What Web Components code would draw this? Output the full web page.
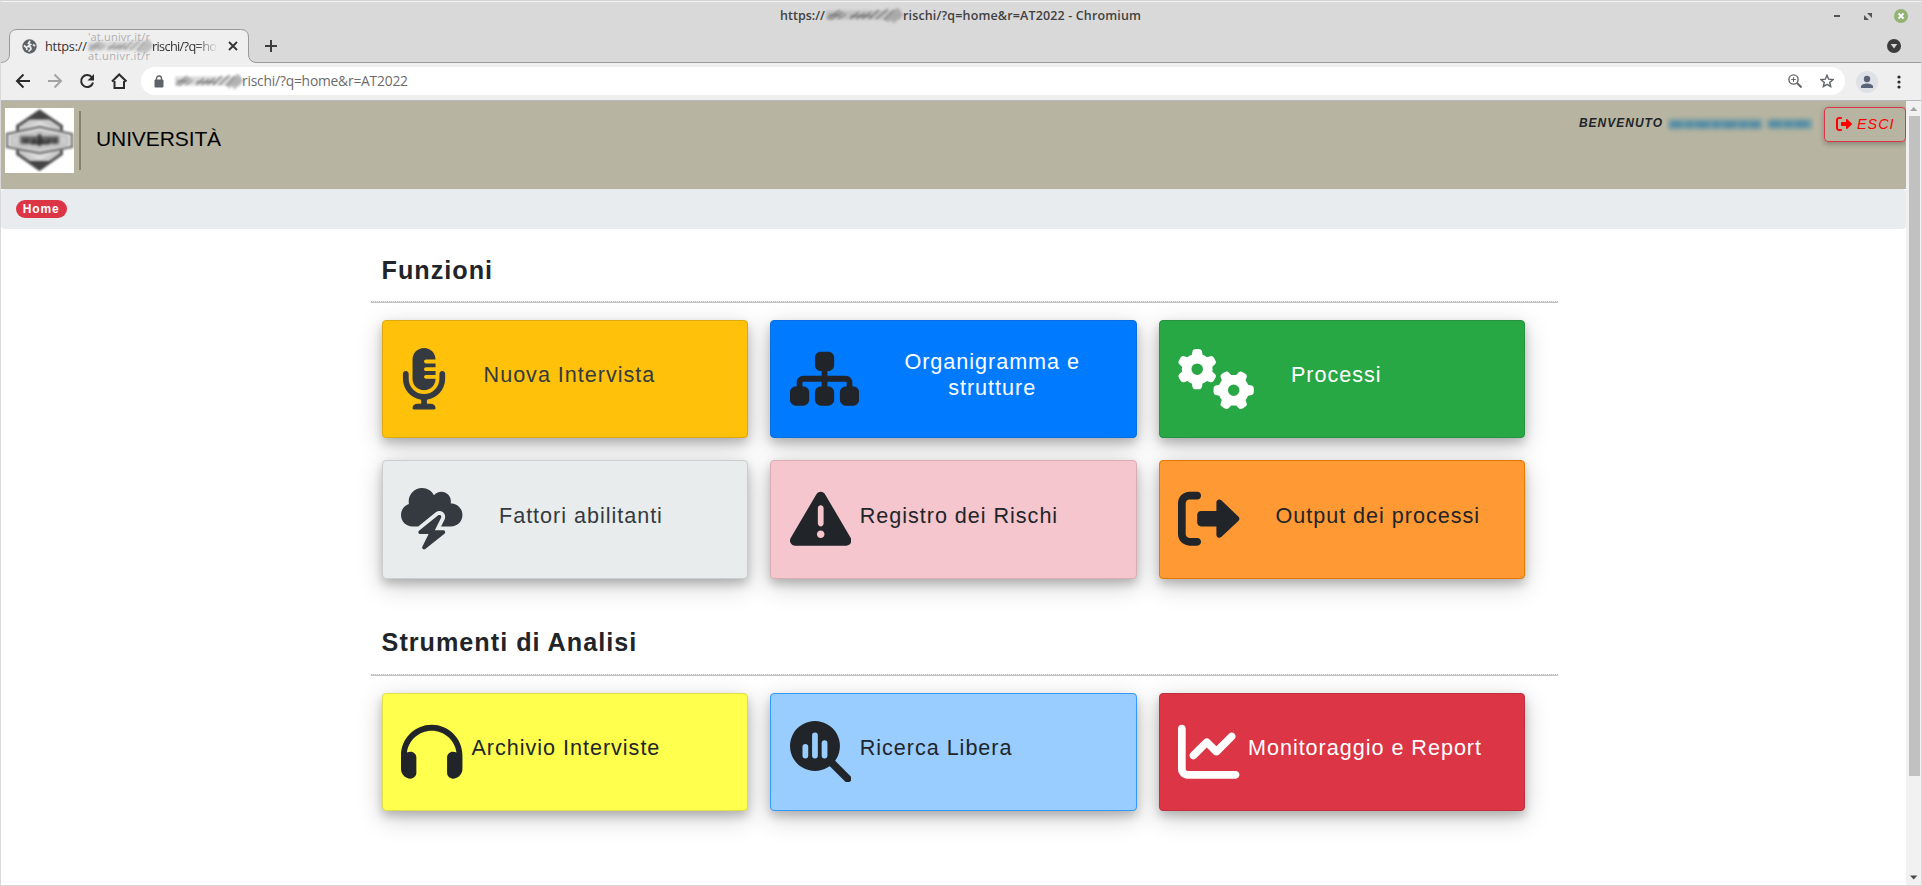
<!DOCTYPE html>
<html lang="it">
<head>
<meta charset="utf-8">
<title>Home</title>
<style>
html,body{margin:0;height:100%;overflow:hidden}
body{background:#fff;font-family:"Liberation Sans",Arial,sans-serif}
</style>
</head>
<body>
<browser-window>
  <window-title slot="title"></window-title>
  <tab-strip slot="tabs"></tab-strip>
  <tool-bar slot="tools"></tool-bar>
  <app-header></app-header>
  <bread-crumb>Home</bread-crumb>
  <tile-section heading="Funzioni">
    <app-tile icon="mic" style="--x:100.6px;--bg:#ffc10a;--bd:#dea90f;--fg:#343a40">Nuova Intervista</app-tile>
    <app-tile icon="sitemap" style="--x:133px;--bg:#007bff;--bd:#0a6fde;--fg:#fff;--ic:#212529">Organigramma e<br>strutture</app-tile>
    <app-tile icon="gears" style="--x:131.2px;--bg:#28a745;--bd:#26923f;--fg:#fff">Processi</app-tile>
    <app-tile icon="storm" style="--x:116px;--dy:1px;--bg:#e8ecec;--bd:#cbcece;--fg:#343a40">Fattori abilitanti</app-tile>
    <app-tile icon="warn" style="--x:88.3px;--dy:1px;--bg:#f5c6cd;--bd:#d8aeb4;--fg:#212529">Registro dei Rischi</app-tile>
    <app-tile icon="exit" style="--x:115.7px;--dy:1px;--bg:#ff9933;--bd:#e67700;--fg:#212529">Output dei processi</app-tile>
  </tile-section>
  <tile-section heading="Strumenti di Analisi" style="--hp:26px">
    <app-tile icon="phones" style="--x:88.500px;--dy:1px;--bg:#ffff4d;--bd:#dfdf49;--fg:#212529">Archivio Interviste</app-tile>
    <app-tile icon="search" style="--x:88.3px;--dy:1px;--bg:#99ccff;--bd:#3399ff;--fg:#212529">Ricerca Libera</app-tile>
    <app-tile icon="chart" style="--x:88.2px;--dy:1px;--bg:#dc3545;--bd:#c12f3e;--fg:#fff">Monitoraggio e Report</app-tile>
  </tile-section>
</browser-window>
<script>
const GEAR='M308.5 135.3c7.1-6.3 9.9-16.2 6.2-25c-2.3-5.3-4.8-10.5-7.6-15.5L304 89.4c-3-5-6.3-9.9-9.8-14.6c-5.7-7.6-15.7-10.1-24.7-7.1l-28.2 9.3c-10.7-8.8-23-16-36.2-20.9L199 27.1c-1.9-9.3-9.1-16.7-18.5-17.8C173.9 8.4 167.2 8 160.4 8h-.7c-6.8 0-13.5 .4-20.1 1.2c-9.4 1.1-16.6 8.6-18.5 17.8L115 56.1c-13.3 5-25.5 12.1-36.2 20.9L50.5 67.8c-9-3-19-.5-24.7 7.1c-3.5 4.7-6.8 9.6-9.9 14.6l-3 5.3c-2.8 5-5.3 10.2-7.6 15.6c-3.7 8.7-.9 18.6 6.2 25l22.2 19.8C32.6 161.9 32 168.9 32 176s.6 14.1 1.7 20.9L11.5 216.7c-7.1 6.3-9.9 16.2-6.2 25c2.3 5.3 4.8 10.5 7.6 15.6l3 5.2c3 5.1 6.3 9.9 9.9 14.6c5.7 7.6 15.7 10.1 24.7 7.1l28.2-9.3c10.7 8.8 23 16 36.2 20.9l6.1 29.1c1.9 9.3 9.1 16.7 18.5 17.8c6.7 .8 13.5 1.2 20.4 1.2s13.7-.4 20.4-1.2c9.4-1.1 16.6-8.6 18.5-17.8l6.1-29.1c13.3-5 25.5-12.1 36.2-20.9l28.2 9.3c9 3 19 .5 24.7-7.1c3.5-4.7 6.8-9.5 9.8-14.6l3.1-5.4c2.8-5 5.3-10.2 7.6-15.5c3.7-8.7 .9-18.6-6.2-25l-22.2-19.8c1.1-6.8 1.7-13.8 1.7-20.9s-.6-14.1-1.7-20.9l22.2-19.8zM112 176a48 48 0 1 1 96 0 48 48 0 1 1 -96 0z';
const EXIT='M96 480h64C177.7 480 192 465.7 192 448S177.7 416 160 416H96c-17.67 0-32-14.33-32-32V128c0-17.67 14.33-32 32-32h64C177.7 96 192 81.67 192 64S177.7 32 160 32H96C42.98 32 0 74.98 0 128v256C0 437 42.98 480 96 480zM504.8 238.5l-144.1-136c-6.975-6.578-17.2-8.375-26-4.594c-8.803 3.797-14.51 12.47-14.51 22.05l-.0918 72l-128-.001c-17.69 0-32.02 14.33-32.02 32v64c0 17.67 14.34 32 32.02 32l128 .001l.0918 71.1c0 9.578 5.707 18.25 14.51 22.05c8.803 3.781 19.03 1.984 26-4.594l144.1-136C514.4 264.4 514.4 247.6 504.8 238.5z';
const p=d=>`<path d="${d}"/>`;
const ICONS={
 mic:[384,p('M96 96V256c0 53 43 96 96 96s96-43 96-96H208c-8.8 0-16-7.2-16-16s7.2-16 16-16h80V192H208c-8.8 0-16-7.2-16-16s7.2-16 16-16h80V128H208c-8.8 0-16-7.2-16-16s7.2-16 16-16h80c0-53-43-96-96-96S96 43 96 96zM320 240v16c0 70.7-57.3 128-128 128s-128-57.3-128-128V216c0-13.3-10.7-24-24-24s-24 10.7-24 24v40c0 89.1 66.2 162.7 152 174.4V464H136c-22 0-40 14-40 36 0 8 5 12 12 12H276c7 0 12-4 12-12 0-22-18-36-40-36H216V430.4c85.8-11.7 152-85.3 152-174.4V216c0-13.3-10.7-24-24-24s-24 10.7-24 24v24z')],
 sitemap:[576,p('M208 80c0-26.5 21.5-48 48-48h64c26.5 0 48 21.5 48 48v64c0 26.5-21.5 48-48 48h-8v40H464c30.9 0 56 25.1 56 56v32h8c26.5 0 48 21.5 48 48v64c0 26.5-21.5 48-48 48H464c-26.5 0-48-21.5-48-48V368c0-26.5 21.5-48 48-48h8V288c0-4.4-3.6-8-8-8H312v40h8c26.5 0 48 21.5 48 48v64c0 26.5-21.5 48-48 48H256c-26.5 0-48-21.5-48-48V368c0-26.5 21.5-48 48-48h8V280H112c-4.4 0-8 3.6-8 8v32h8c26.5 0 48 21.5 48 48v64c0 26.5-21.5 48-48 48H48c-26.5 0-48-21.5-48-48V368c0-26.5 21.5-48 48-48h8V288c0-30.9 25.1-56 56-56H264V192h-8c-26.5 0-48-21.5-48-48V80z')],
 gears:[640,p(GEAR)+`<path transform="translate(464 352) rotate(90) translate(-160 -176)" d="${GEAR}"/>`],
 storm:[512,p('M0 224c0 53 43 96 96 96h47.2L290 202.5c17.6-14.1 42.6-14 60.2 .2s22.8 38.6 12.8 58.8L333.7 320H352h64c53 0 96-43 96-96s-43-96-96-96c-.5 0-1.1 0-1.6 0c1.1-5.2 1.6-10.5 1.6-16c0-44.2-35.8-80-80-80c-24.3 0-46.1 10.9-60.8 28C256.5 24.3 219.1 0 176 0C114.1 0 64 50.1 64 112c0 7.1 .7 14.1 1.9 20.8C27.6 145.4 0 181.5 0 224zm330.1 3.6c-5.8-4.7-14.2-4.7-20.1-.1l-160 128c-5.3 4.2-7.4 11.4-5.1 17.8s8.3 10.7 15.1 10.7h70.1L177.7 488.8c-3.4 6.7-1.6 14.9 4.3 19.6s14.2 4.7 20.1 .1l160-128c5.3-4.2 7.4-11.4 5.1-17.8s-8.3-10.7-15.1-10.7H281.9l52.4-104.8c3.4-6.7 1.6-14.9-4.2-19.6z')],
 warn:[512,p('M506.3 417l-213.3-364c-16.33-28-57.54-28-73.98 0l-213.2 364C-10.59 444.9 9.849 480 42.74 480h426.6C502.1 480 522.6 445 506.3 417zM232 168c0-13.25 10.75-24 24-24S280 154.8 280 168v128c0 13.25-10.75 24-23.1 24S232 309.3 232 296V168zM256 416c-17.36 0-31.44-14.08-31.44-31.44c0-17.36 14.07-31.44 31.44-31.44s31.44 14.08 31.44 31.44C287.4 401.9 273.4 416 256 416z')],
 exit:[512,p(EXIT)],
 phones:[512,p('M256 80C149.9 80 62.4 159.4 49.6 262c9.4-3.8 19.6-6 30.4-6c26.5 0 48 21.5 48 48V432c0 26.5-21.5 48-48 48c-44.2 0-80-35.8-80-80V384 336 288C0 146.6 114.6 32 256 32s256 114.6 256 256v48 48 16c0 44.2-35.8 80-80 80c-26.5 0-48-21.5-48-48V304c0-26.5 21.5-48 48-48c10.8 0 21 2.1 30.4 6C449.6 159.4 362.1 80 256 80z')],
 search:[512,'<path d="M208 0a208 208 0 1 0 .1 0zM104 216a24 24 0 0 1 48 0v72a24 24 0 0 1-48 0zM184 120a24 24 0 0 1 48 0v168a24 24 0 0 1-48 0zM264 184a24 24 0 0 1 48 0v104a24 24 0 0 1-48 0z" fill-rule="evenodd"/><path d="M350 350L480 480" stroke="currentColor" stroke-width="64" stroke-linecap="round"/>'],
 chart:[512,p('M64 64c0-17.7-14.3-32-32-32S0 46.3 0 64V400c0 44.2 35.8 80 80 80H480c17.7 0 32-14.3 32-32s-14.3-32-32-32H80c-8.8 0-16-7.2-16-16V64zm406.6 86.6c12.5-12.5 12.5-32.8 0-45.3s-32.8-12.5-45.3 0L320 210.7l-57.4-57.4c-12.5-12.5-32.8-12.5-45.3 0l-112 112c-12.5 12.5-12.5 32.8 0 45.3s32.8 12.5 45.3 0L240 221.3l57.4 57.4c12.5 12.5 32.8 12.5 45.3 0l128-128z')]
};
function define(name,html,after){
  customElements.define(name,class extends HTMLElement{
    connectedCallback(){
      if(this.shadowRoot)return;
      this.attachShadow({mode:'open'}).innerHTML=typeof html==='function'?html(this):html;
      if(after)after(this);
    }
  });
}

/* Text tracked so that it fills a given width. */
define('fit-text','<style>:host{display:inline-block;white-space:nowrap}</style><span><slot></slot></span>',el=>{
  const w=+el.getAttribute('width'),s=el.shadowRoot.querySelector('span');
  const n=el.textContent.length;
  s.style.letterSpacing=((w-s.getBoundingClientRect().width)/(n-1))+'px';
  el.style.width=w+'px';
});

/* Smeared strip over a hidden host name. */
define('smear-mark',`<style>:host{display:block;width:76px;height:16px}svg{display:block;overflow:visible}</style>
<svg width="100%" height="16" viewBox="0 0 76 16" preserveAspectRatio="none" fill="none">
<g style="filter:blur(1.1px)"><path d="M0 8h75" stroke="#999" stroke-width="9" opacity=".36"/>
<g stroke="#555" stroke-width="2" opacity=".5"><path d="M1 12L14 3M4 13L17 5M12 12l8-5M24 12l9-7M30 12l9-6M36 12l9-7M43 12l10-9M50 12l12-10M58 13l10-10"/></g>
<path d="M2 8h12M24 9h22" stroke="#444" stroke-width="2" opacity=".35"/><path d="M60 14l13-12M66 15l10-9" stroke="#999" stroke-width="5" opacity=".6"/></g></svg>`);

define('browser-window',`<style>
:host{display:grid;grid-template-rows:29px 34px 38px 1fr;width:1922px;height:886px;box-sizing:border-box;border:solid #d9d9d9;border-width:0 1px 1px;background:#fff;overflow:hidden}
.view{display:grid;grid-template-columns:1fr 15px;min-height:0}
.page{overflow:hidden;min-width:0}
.bar{background:#f1f1f1;display:grid;grid-template-rows:15px 660px 1fr;justify-items:center}
.thumb{width:11px;height:660px;background:#c1c1c1;margin-left:1px}
svg{display:block}.dn{align-self:end}
</style>
<slot name="title"></slot><slot name="tabs"></slot><slot name="tools"></slot>
<div class="view"><div class="page"><slot></slot></div>
<div class="bar"><svg width="15" height="15"><path d="M4 10l3.7-4 3.7 4z" fill="#a3a3a3"/></svg><div class="thumb"></div><svg class="dn" width="15" height="15"><path d="M4 5.5l3.7 4 3.7-4z" fill="#4b4b4b"/></svg></div></div>`);

define('window-title',`<style>
:host{display:grid;grid-template-columns:779px 46px 77px 238px 1fr;background:#d9d9d9;box-shadow:inset 0 1px #d3d3d3,inset 0 2px #f3f3f3;align-items:center;font:600 12.5px/29px "Open Sans","Noto Sans",sans-serif;color:#414141;height:29px}
fit-text{position:relative;top:1px}
.b{display:flex;justify-self:end;gap:21px;align-items:center;margin-right:13px;padding-top:2px}
svg{display:block}
</style><i></i><fit-text width="45">https://</fit-text><smear-mark></smear-mark><fit-text width="238">rischi/?q=home&amp;r=AT2022 - Chromium</fit-text>
<div class="b"><svg width="10" height="14"><path d="M2 6h6v2H2z" fill="#555"/></svg>
<svg width="10" height="14"><path d="M4 4h5v5zM1 6v5h5z" fill="#555"/><path d="M2 4l6 7" stroke="#d9d9d9"/></svg>
<svg width="14" height="14"><circle cx="7" cy="7" r="7" fill="#92b372"/><path d="M4.5 4.5l5 5m0-5l-5 5" stroke="#fff" stroke-width="2"/></svg></div>`);

define('tab-strip',`<style>
:host{display:grid;grid-template-columns:258px 26px 1fr;background:#d9d9d9;height:34px;box-shadow:inset 0 -1px #999;font:12.8px/34px "Open Sans","Noto Sans",sans-serif;color:#333}
.tab{display:grid;height:34px}
.tab>*{grid-area:1/1}
svg{display:block}
.row{display:grid;grid-template-columns:21px 23px 42px 65px 66px 10px 1fr;align-items:center}
.g{height:34px;box-sizing:border-box;padding:1px 0 0 1px;display:grid;grid-template-rows:13px 6px 13px;font-size:11px;line-height:13px;color:#b0b0b0}
.g smear-mark{width:64px;height:6px;margin-top:-5px;opacity:.75}
.fade{-webkit-mask:linear-gradient(90deg,#000 65%,transparent);mask:linear-gradient(90deg,#000 65%,transparent)}
.plus{align-self:center;justify-self:end;margin:0 8px 0 0}.menu{justify-self:end;align-self:center;margin-right:20px}
</style>
<div class="tab"><svg width="258" height="34"><path d="M0 34V33Q8 33 8 25V8Q8 .5 16 .5H239.500Q247.500 .5 247.500 8V25Q247.500 33.500 256 33.500V34z" fill="#efefef"/><path d="M0 33.500Q8.500 33 8.500 25V8Q8.500 .5 16 .5H239.500Q247.500 .5 247.500 8V25Q247.500 33.500 256 33.500" fill="none" stroke="#999"/></svg>
<div class="row"><i></i><svg width="15" height="15" viewBox="0 0 15 15"><circle cx="7.500" cy="7.500" r="7.200" fill="#5f6368"/><path d="M8 1.800L6.500 4.500l2 1L6 7.500l2.500.5.500 2-2.500 2.500M2 6.500l2.500 2 .5 2.500M11 5.500l2 1.500" fill="none" stroke="#efefef" stroke-width="1.700"/></svg>
<fit-text width="42">https://</fit-text><div class="g"><fit-text width="62">'at.univr.it/r</fit-text><smear-mark></smear-mark><fit-text width="62">at.univr.it/r</fit-text></div><div class="fade"><fit-text width="65">rischi/?q=ho</fit-text></div><svg style="margin-left:9px" width="12" height="12"><path d="M2 2l8 8m0-8l-8 8" stroke="#333" stroke-width="1.800"/></svg></div></div>
<svg class="plus" width="12" height="12"><path d="M6 0v12M0 6h12" stroke="#3c3c3c" stroke-width="2"/></svg>
<svg class="menu" width="14" height="14"><circle cx="7" cy="7" r="7" fill="#3c3c3c"/><path d="M3.700 5h6.600L7 9.500z" fill="#d9d9d9"/></svg>`);

define('tool-bar',`<style>
:host{display:grid;grid-template-columns:140px 1704px 1fr;background:#efefef;height:38px;box-shadow:inset 0 -1px #b6b8bb;font:13.800px/28px "Open Sans","Noto Sans",sans-serif;color:#6b6b6b}
svg{display:block}
.nav{display:flex;gap:16px;padding:10px 0 0 14px}
.url{height:28px;margin-top:4px;border-radius:14px;background:#fff;display:grid;grid-template-columns:13px 21px 67px 1fr 14px 18px 14px 11px;align-items:center}
.url smear-mark{width:67px}
.r{display:flex;align-items:center;gap:19px;padding:0 0 2px 11px;height:34px;margin-top:2px}
</style>
<div class="nav"><svg width="16" height="16" fill="none" stroke="#2b2b2b" stroke-width="2"><path d="M15 8H3M8.500 1.500L2 8l6.500 6.500"/></svg>
<svg width="16" height="16" fill="none" stroke="#a3a3a3" stroke-width="2"><path d="M1 8h12M7.500 1.500L14 8l-6.500 6.500"/></svg>
<svg width="16" height="16"><path d="M13 4.500A6 6 0 1 0 14 9.500" fill="none" stroke="#2b2b2b" stroke-width="2"/><path d="M15 1v6.500H8.500z" fill="#2b2b2b"/></svg>
<svg width="17" height="16"><path d="M3.500 8v7h9.500V8M1 8.500L8.200 1.500l7.300 7" fill="none" stroke="#2b2b2b" stroke-width="2"/></svg></div>
<div class="url"><i></i><svg width="10" height="13"><path d="M1 5h8v7H1z" fill="#5f6368" stroke="#5f6368"/><path d="M2.500 5V3.500a2.500 2.500 0 0 1 5 0V5" fill="none" stroke="#5f6368" stroke-width="1.400"/></svg><smear-mark></smear-mark><fit-text width="166">rischi/?q=home&amp;r=AT2022</fit-text>
<svg width="14" height="14" fill="none" stroke="#666" stroke-width="1.400"><circle cx="5.500" cy="5.500" r="4.600"/><path d="M9 9l4.500 4.500" stroke-width="2"/><path d="M3.200 5.500h4.600M5.500 3.200v4.600" stroke-width="1"/></svg><i></i>
<svg width="14" height="14" fill="none" stroke="#5f6368" stroke-width="1.400"><path d="M7 1.200l1.700 4 4.300.4-3.300 2.800 1 4.200L7 10.400l-3.700 2.200 1-4.200L1 5.600l4.300-.4z"/></svg></div>
<div class="r"><svg width="22" height="22"><circle cx="11" cy="11" r="11" fill="#dee1e6"/><circle cx="11" cy="8" r="3.200" fill="#5a6478"/><path d="M5 17v-1.500c0-2 3.500-3 6-3s6 1 6 3V17z" fill="#5a6478"/></svg>
<svg width="4" height="14" fill="#2b2b2b"><circle cx="2" cy="2" r="1.600"/><circle cx="2" cy="7" r="1.600"/><circle cx="2" cy="12" r="1.600"/></svg></div>`);

define('app-header',`<style>
:host{display:grid;grid-template-columns:69px 8px 1fr auto auto;height:88px;background:#b7b5a1;align-items:start}
svg{display:block}
.logo{margin:7px 0 0 4px}
.sep{width:2px;height:59px;margin:10px 0 0 9px;background:#84836f}
.name{font-size:21px;line-height:24px;color:#000;letter-spacing:-.1px;margin:26px 0 0 18px}
.hi{display:flex;margin-top:14px;font:italic bold 12px/16px "Liberation Sans",Arial,sans-serif;letter-spacing:1px;color:#212529;gap:3px}
.btn{box-sizing:border-box;width:82px;height:35px;margin:6px 0 0 10px;border:1px solid #dc3545;border-radius:4px;display:flex;align-items:center;gap:5px;padding:0 0 1px 11px;font:italic 14.4px/20px "Liberation Sans",Arial,sans-serif;letter-spacing:1px;color:#f00;box-shadow:0 2px 5px rgba(0,0,0,.16),0 2px 6px rgba(0,0,0,.12)}
</style>
<svg class="logo" width="69" height="65" viewBox="0 0 69 65"><path d="M0 0h69v65H0z" fill="#fff"/>
<g style="filter:blur(.8px)"><path d="M34.500 3L56.500 18v28L34.500 61.500 12.500 46V18z" fill="#ccc" stroke="#555" stroke-width="3"/><path d="M34.500 3L47 11.500H22zM34.500 61.500L47 53H22z" fill="#444"/><path d="M34.500 13l15 8H19.500zM34.500 52l15-8H19.500z" fill="#ddd"/>
<path d="M2 26L34.500 19 67 26v13L34.500 45 2 39z" fill="#eee" stroke="#777" stroke-width="2.600"/><path d="M6 28.500L34.500 23 63 28.500v8L34.500 41.500 6 36.500z" fill="#ccc" stroke="#aaa"/></g>
<g style="filter:blur(1.500px)"><path d="M15 32h39" stroke="#666" stroke-width="8"/><path d="M18 33h34" stroke="#444" stroke-width="5" stroke-dasharray="6 3 4 2"/><path d="M26 35h18M34.500 26v12" stroke="#333" stroke-width="3"/></g></svg>
<div class="sep"></div><div class="name">UNIVERSITÀ</div>
<div class="hi">BENVENUTO<svg width="148" height="20" fill="none"><g style="filter:blur(2.500px)"><path d="M3 9H96M102 9H146" stroke="#3f87a8" stroke-width="9" opacity=".6"/><path d="M3 10H94M102 9H144" stroke="#2f7ba6" stroke-width="7" stroke-dasharray="13 4 7 3" opacity=".5"/></g></svg></div>
<div class="btn"><svg width="16" height="16" viewBox="0 0 512 512" fill="#f00"><path d="${EXIT}"/></svg>ESCI</div>`);

define('bread-crumb',`<style>
:host{display:flex;height:40px;box-sizing:border-box;background:#e8ecef;border-radius:4px;padding:11px 15px}
span{height:18px;box-sizing:border-box;width:51px;border-radius:9px;background:#dc3545;color:#fff;font:bold 12px/18px "Liberation Sans",Arial,sans-serif;letter-spacing:.9px;padding-left:6.700px}
</style><span><slot></slot></span>`);

define('tile-section',el=>`<style>
:host{display:block;width:1187px;margin-left:370px}
h2{margin:0;height:72px;box-sizing:border-box;padding:var(--hp,27px) 0 0 10.600px;font:bold 25.200px/29px "Liberation Sans",Arial,sans-serif;letter-spacing:1px;color:#212529}
.rule{height:2px;background:repeating-linear-gradient(90deg,#bbb 0 1px,#eee 1px 2px) top/100% 1px no-repeat,linear-gradient(#c4c4c4,#c4c4c4) bottom/100% 1px no-repeat}
.grid{display:grid;grid-template-columns:repeat(3,366.400px);gap:22px;padding:17px 0 23.200px 11px}
</style><h2>${el.getAttribute('heading')}</h2><div class="rule"></div><div class="grid"><slot></slot></div>`);

define('app-tile',el=>{const[w,body]=ICONS[el.getAttribute('icon')];return`<style>
:host{display:grid;grid-template-columns:var(--x) max-content;height:118.400px;box-sizing:border-box;background:var(--bg);border:1px solid var(--bd);border-radius:4px;color:var(--fg);box-shadow:0 5px 10px 0 rgba(0,0,0,.2),0 7px 26px 0 rgba(0,0,0,.2)}
svg{display:block;margin:27px 0 0 18.300px;color:var(--ic,var(--fg));height:61.500px;fill:currentColor}
.t{height:107px;margin-top:var(--dy,0);display:grid;align-content:center;text-align:center;font-size:21.600px;line-height:26px;letter-spacing:.97px}
</style><svg width="${w*.12}" viewBox="0 0 ${w} 512">${body}</svg><div class="t"><div><slot></slot></div></div>`});
</script>
</body>
</html>
